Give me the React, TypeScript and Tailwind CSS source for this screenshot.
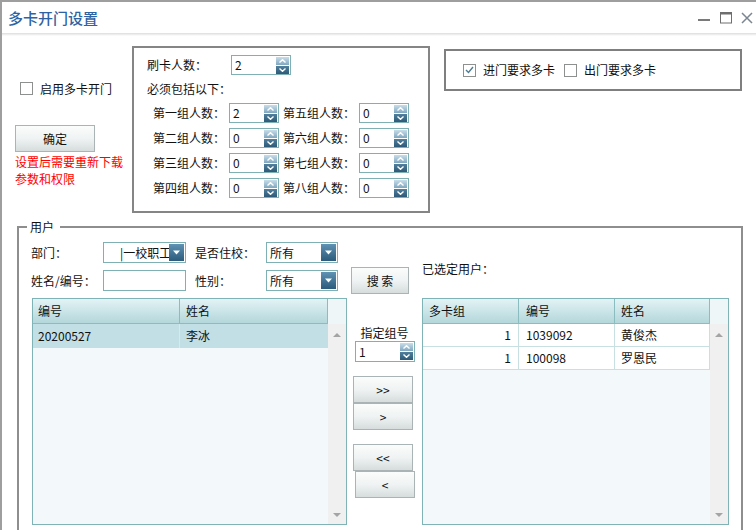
import React from "react";

function Chevron({ dir }: { dir: "up" | "down" }) {
  return (
    <svg width="7" height="4" viewBox="0 0 7 4">
      <path
        d={dir === "up" ? "M0.5 3.5 L3.5 0.7 L6.5 3.5" : "M0.5 0.5 L3.5 3.3 L6.5 0.5"}
        fill="none"
        stroke="#ffffff"
        strokeWidth="1.4"
      />
    </svg>
  );
}

function Spinner({ cls, value }: { cls: string; value: string }) {
  return (
    <div className={`${cls} border border-[#7fb0b4] bg-white flex items-center justify-between`}>
      <span className="pl-[3px] text-[12px] leading-none text-[#141414]">{value}</span>
      <div className="flex flex-col gap-[1px] mr-[1px]">
        <div className="w-[13px] h-[8px] bg-gradient-to-b from-[#c9dde9] to-[#7fa7c0] flex items-center justify-center">
          <Chevron dir="up" />
        </div>
        <div className="w-[13px] h-[8px] bg-gradient-to-b from-[#527f9c] to-[#2d5a78] flex items-center justify-center">
          <Chevron dir="down" />
        </div>
      </div>
    </div>
  );
}

function Select({ cls, text, textCls }: { cls: string; text: string; textCls: string }) {
  return (
    <div className={`relative ${cls} h-[21px] border border-[#7fb0b4] bg-white overflow-hidden`}>
      <div className={`h-full flex items-center whitespace-nowrap leading-none ${textCls}`}>{text}</div>
      <div className="absolute right-[1px] top-[1px] w-[15px] h-[17px] bg-gradient-to-b from-[#5f92b3] to-[#2c5b7b] flex items-center justify-center">
        <svg width="7" height="5" viewBox="0 0 7 5">
          <path d="M0 0.5 L7 0.5 L3.5 4.5 Z" fill="#ffffff" />
        </svg>
      </div>
    </div>
  );
}

function Btn({ cls, children }: { cls: string; children: React.ReactNode }) {
  return (
    <div
      className={`${cls} border border-[#aab4b4] bg-gradient-to-b from-[#fbfcfc] via-[#f0f3f3] to-[#d6dddd] flex items-center justify-center text-[12px] leading-none text-[#111]`}
    >
      {children}
    </div>
  );
}

function Check({ checked }: { checked?: boolean }) {
  return (
    <div className="w-[13px] h-[13px] border border-[#8e8f8f] bg-white flex items-center justify-center shrink-0">
      {checked && (
        <svg width="9" height="8" viewBox="0 0 9 8">
          <path d="M1 4 L3.5 6.5 L8 1" stroke="#4d7b93" strokeWidth="1.4" fill="none" />
        </svg>
      )}
    </div>
  );
}

function UpTri() {
  return (
    <svg width="8" height="4" viewBox="0 0 8 4">
      <path d="M0 4 L4 0 L8 4 Z" fill="#a4a4a4" />
    </svg>
  );
}
function DownTri() {
  return (
    <svg width="8" height="4" viewBox="0 0 8 4">
      <path d="M0 0 L8 0 L4 4 Z" fill="#a4a4a4" />
    </svg>
  );
}

function ScrollCol() {
  return (
    <div className="w-[18px] flex flex-col">
      <div className="h-[25px] bg-[#eef6f8]" />
      <div className="flex-1 bg-[#f0f0f0] flex flex-col items-center justify-between pt-[9px] pb-[7px]">
        <UpTri />
        <DownTri />
      </div>
    </div>
  );
}

export default function App() {
  return (
    <div className="w-[756px] h-[530px] overflow-hidden bg-white border-t-2 border-l-2 border-[#9e9e9e] font-['Noto_Sans_CJK_SC','Noto_Sans',sans-serif] text-[12px] text-[#111]">
      {/* title bar */}
      <div className="h-[31px] flex items-center justify-between pl-[6px] pr-[3px]">
        <span className="text-[15px] font-medium text-[#2f62a3] leading-none">多卡开门设置</span>
        <div className="flex items-center mt-[1px]">
          <svg width="12" height="12" viewBox="0 0 12 12">
            <rect x="0" y="7" width="12" height="2" fill="#7a7a7a" />
          </svg>
          <svg width="12" height="12" viewBox="0 0 12 12" className="ml-[10px]">
            <rect x="0.5" y="0.5" width="11" height="10.5" stroke="#6e6e6e" fill="none" />
            <rect x="0" y="0" width="12" height="2.5" fill="#6e6e6e" />
          </svg>
          <svg width="12" height="12" viewBox="0 0 12 12" className="ml-[9px]">
            <path d="M1 1 L11 11 M11 1 L1 11" stroke="#7b8692" strokeWidth="1.5" />
          </svg>
        </div>
      </div>
      <div className="h-[3px] bg-gradient-to-b from-[#dcdcdc] to-white" />

      {/* top section */}
      <div className="flex items-start mt-[10px] ml-[13px]">
        <div className="w-[117px] flex flex-col">
          <div className="mt-[36px] ml-[5px] h-[13px] flex items-center gap-[7px]">
            <Check />
            <span className="leading-none">启用多卡开门</span>
          </div>
          <Btn cls="mt-[30px] w-[80px] h-[27px]">确定</Btn>
          <div className="mt-[1px] text-[#ff0000] leading-[17px]">
            设置后需要重新下载
            <br />
            参数和权限
          </div>
        </div>

        <div className="w-[298px] h-[167px] border-2 border-[#858585] flex flex-col">
          <div className="mt-[7px] h-[20px] flex items-center pl-[13px]">
            <span className="w-[84px] leading-none">刷卡人数：</span>
            <Spinner cls="w-[60px] h-[20px]" value="2" />
          </div>
          <div className="mt-[5px] h-[18px] leading-[18px] pl-[13px]">必须包括以下：</div>
          <div className="mt-[5px] flex flex-col gap-[5px] pl-[19px]">
            {[
              ["第一组人数：", "2", "第五组人数：", "0"],
              ["第二组人数：", "0", "第六组人数：", "0"],
              ["第三组人数：", "0", "第七组人数：", "0"],
              ["第四组人数：", "0", "第八组人数：", "0"],
            ].map((r) => (
              <div key={r[0]} className="h-[20px] flex items-center">
                <span className="w-[76px] leading-none">{r[0]}</span>
                <Spinner cls="w-[50px] h-[20px]" value={r[1]} />
                <span className="ml-[4px] w-[76px] leading-none">{r[2]}</span>
                <Spinner cls="w-[50px] h-[20px]" value={r[3]} />
              </div>
            ))}
          </div>
        </div>

        <div className="ml-[14px] mt-[3px] w-[298px] h-[42px] border-2 border-[#7f7f7f] flex items-center pl-[17px]">
          <Check checked />
          <span className="ml-[7px] leading-none">进门要求多卡</span>
          <div className="ml-[9px]">
            <Check />
          </div>
          <span className="ml-[7px] leading-none">出门要求多卡</span>
        </div>
      </div>

      {/* user group */}
      <div className="relative ml-[15px] mt-[13px] w-[726px] h-[330px] border-2 border-[#8e8e8e]">
        <span className="absolute left-[8px] -top-[9px] bg-white pl-[3px] pr-[6px] leading-[16px]">用户</span>

        <div className="flex items-start pl-[12px] mt-[14px]">
          <div className="flex flex-col">
            <div className="h-[21px] flex items-center">
              <span className="w-[72px] leading-none">部门：</span>
              <Select cls="w-[83px]" text="|一校职工" textCls="pl-[16px]" />
              <span className="ml-[9px] w-[71px] leading-none">是否住校：</span>
              <Select cls="w-[72px]" text="所有" textCls="pl-[3px]" />
            </div>
            <div className="mt-[4px] h-[27px] flex items-center">
              <span className="w-[72px] leading-none">姓名/编号：</span>
              <div className="w-[83px] h-[21px] border border-[#7fb0b4] bg-white" />
              <span className="ml-[9px] w-[71px] leading-none">性别：</span>
              <Select cls="w-[72px]" text="所有" textCls="pl-[3px]" />
              <Btn cls="ml-[13px] w-[58px] h-[27px]">搜 索</Btn>
            </div>
          </div>
          <span className="ml-[13px] mt-[19px] leading-[16px]">已选定用户：</span>
        </div>

        <div className="flex items-start pl-[13px] mt-[4px]">
          {/* left table */}
          <div className="w-[315px] h-[227px] border border-[#7fb3b6] flex">
            <div className="flex-1 flex flex-col bg-[#f3f8fb]">
              <div className="h-[25px] flex border-b border-[#8bbdc0] bg-gradient-to-b from-[#e3f3f5] to-[#b3d7db]">
                <div className="w-[147px] border-r border-[#8bbdc0] pl-[5px] flex items-center">编号</div>
                <div className="flex-1 border-r border-[#8bbdc0] pl-[6px] flex items-center">姓名</div>
              </div>
              <div className="h-[24px] flex bg-[#c1dfe5]">
                <div className="w-[147px] border-r border-[#d6eaed] pl-[5px] flex items-center">20200527</div>
                <div className="flex-1 pl-[6px] flex items-center">李冰</div>
              </div>
            </div>
            <ScrollCol />
          </div>

          {/* middle column */}
          <div className="w-[75px] flex flex-col">
            <div className="mt-[27px] h-[16px] leading-[16px] text-center">指定组号</div>
            <div className="ml-[8px]">
              <Spinner cls="w-[60px] h-[21px]" value="1" />
            </div>
            <Btn cls="ml-[6px] mt-[14px] w-[60px] h-[27px]">&gt;&gt;</Btn>
            <Btn cls="ml-[6px] w-[60px] h-[27px]">&gt;</Btn>
            <Btn cls="ml-[6px] mt-[14px] w-[60px] h-[27px]">&lt;&lt;</Btn>
            <Btn cls="ml-[8px] w-[60px] h-[27px]">&lt;</Btn>
          </div>

          {/* right table */}
          <div className="w-[307px] h-[227px] border border-[#7fb3b6] flex">
            <div className="flex-1 flex flex-col bg-[#f3f8fb]">
              <div className="h-[25px] flex border-b border-[#8bbdc0] bg-gradient-to-b from-[#e3f3f5] to-[#b3d7db]">
                <div className="w-[96px] border-r border-[#8bbdc0] pl-[6px] flex items-center">多卡组</div>
                <div className="w-[96px] border-r border-[#8bbdc0] pl-[7px] flex items-center">编号</div>
                <div className="flex-1 border-r border-[#8bbdc0] pl-[6px] flex items-center">姓名</div>
              </div>
              {[
                ["1", "1039092", "黄俊杰"],
                ["1", "100098", "罗恩民"],
              ].map((r) => (
                <div key={r[1]} className="h-[23px] flex bg-white border-b border-[#c9e0e3]">
                  <div className="w-[96px] border-r border-[#c9e0e3] pr-[7px] flex items-center justify-end">{r[0]}</div>
                  <div className="w-[96px] border-r border-[#c9e0e3] pl-[7px] flex items-center">{r[1]}</div>
                  <div className="flex-1 border-r border-[#c9e0e3] pl-[6px] flex items-center">{r[2]}</div>
                </div>
              ))}
            </div>
            <ScrollCol />
          </div>
        </div>
      </div>
    </div>
  );
}
